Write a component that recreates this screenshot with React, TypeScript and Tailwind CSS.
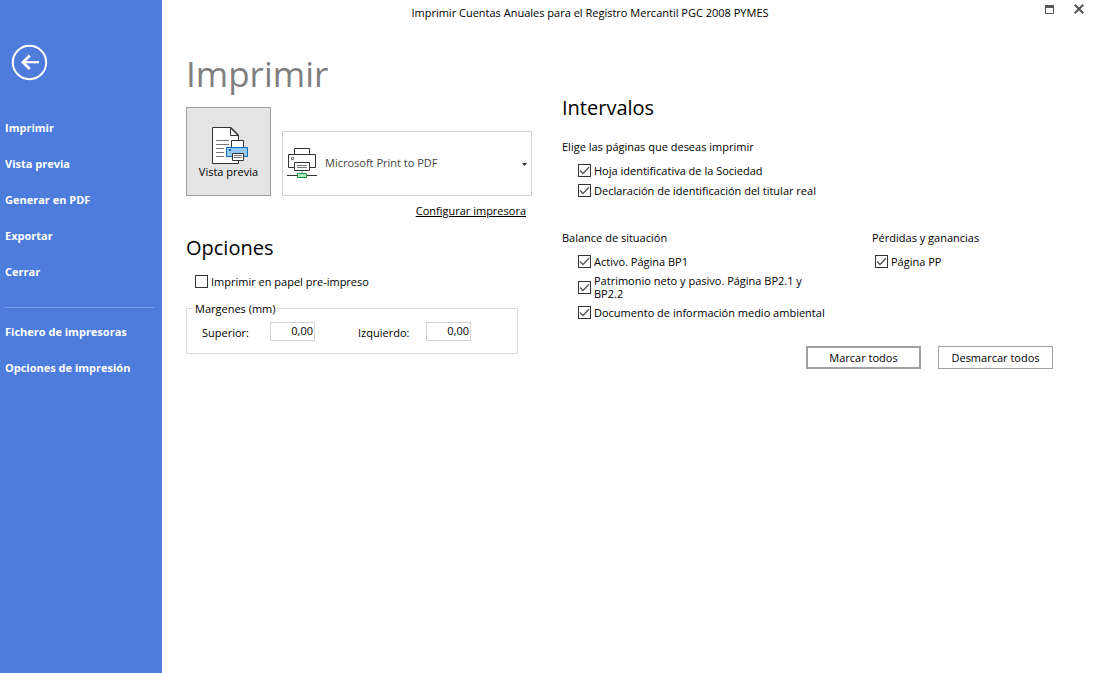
import React, { useState } from 'react'

const mainLinks = ['Imprimir', 'Vista previa', 'Generar en PDF', 'Exportar', 'Cerrar']
const extraLinks = ['Fichero de impresoras', 'Opciones de impresión']

const generalPages = [
  { id: 'hoja', label: 'Hoja identificativa de la Sociedad' },
  { id: 'titular', label: 'Declaración de identificación del titular real' },
]

const balancePages = [
  { id: 'bp1', label: 'Activo. Página BP1' },
  { id: 'bp2', label: 'Patrimonio neto y pasivo. Página BP2.1 y BP2.2' },
  { id: 'ambiental', label: 'Documento de información medio ambiental' },
]

const profitPages = [{ id: 'pp', label: 'Página PP' }]

const allPages = [...generalPages, ...balancePages, ...profitPages]

interface CheckProps {
  label: string;
  checked: boolean;
  onChange: (value: boolean) => void;
}

const Check = ({ label, checked, onChange }: CheckProps) => (
  <label className="flex items-center gap-[3px]">
    <span className="relative h-[13px] w-[13px] shrink-0">
      <input
        type="checkbox"
        checked={checked}
        onChange={(e) => onChange(e.target.checked)}
        className="peer block h-[13px] w-[13px] appearance-none border border-[#333333] bg-white"
      />
      <svg viewBox="0 0 13 13" className="pointer-events-none absolute inset-0 hidden peer-checked:block" fill="none" stroke="#555555" strokeWidth="1.4">
        <path d="M2 6.5 5 9.5 11 3.3" />
      </svg>
    </span>
    <span>{label}</span>
  </label>
)

const PreviewIcon = () => (
  <svg width="38" height="39" viewBox="-1 0 38 39" fill="none">
    <path d="M1.5 1.5h18l8 8v28h-26z" fill="#ffffff" stroke="#333333" />
    <path d="M19.5 1.5v8h8" stroke="#333333" />
    <path d="M19.5 1.5l8 8" stroke="#333333" strokeWidth="1.6" />
    <path d="M5 14.5h13M5 18.5h13M5 22.5h8M5 26.5h8M5 30.5h8" stroke="#777777" />
    <path d="M20.5 14.5h12v8h-12z" fill="#ffffff" stroke="#333333" />
    <path d="M15.5 21.5h21v9h-21z" fill="#91c9f2" stroke="#0f6cbd" />
    <path d="M18 24h2" stroke="#0f6cbd" strokeWidth="2" />
    <path d="M21.5 27.5h11v7h-11z" fill="#ffffff" stroke="#333333" />
    <path d="M23 29.5h8M23 31.5h8" stroke="#777777" />
  </svg>
)

const PrinterIcon = () => (
  <svg width="30" height="32" viewBox="0 0 30 32" fill="none">
    <path d="M7.5 1.5h15v6h-15z" fill="#ffffff" stroke="#333333" />
    <path d="M1.5 7.5h27v13h-27z" fill="#ffffff" stroke="#333333" />
    <path d="M4.5 10.5h2v2h-2z" stroke="#777777" />
    <path d="M7.5 15.5h15v8h-15z" fill="#ffffff" stroke="#333333" />
    <path d="M10 18.5h10M10 20.5h10" stroke="#777777" />
    <path d="M15 24v3" stroke="#bbbbbb" strokeWidth="2" />
    <path d="M0 28.5h30" stroke="#333333" />
    <path d="M10.5 26.5h9v4h-9z" fill="#b5e3be" stroke="#119a3c" />
  </svg>
)

const MarginField = ({ id, label }: { id: string; label: string }) => (
  <div className="flex items-center gap-2">
    <label htmlFor={id} className="w-[60px] pt-0.5">{label}</label>
    <input
      id={id}
      defaultValue="0,00"
      className="h-[19px] w-[45px] border border-[#d4d4d4] pr-px pb-0.5 text-right"
    />
  </div>
)

export default function App() {
  const [selected, setSelected] = useState<string[]>(allPages.map((p) => p.id))
  const [preprinted, setPreprinted] = useState(false)

  const toggle = (id: string, value: boolean) =>
    setSelected((prev) => (value ? [...prev, id] : prev.filter((x) => x !== id)))

  const renderPages = (pages: { id: string; label: string }[]) =>
    pages.map((p) => (
      <Check key={p.id} label={p.label} checked={selected.includes(p.id)} onChange={(v) => toggle(p.id, v)} />
    ))

  return (
    <div className="flex min-h-screen bg-white font-['Open_Sans',sans-serif] text-[11px] leading-[13px] text-black">
      <aside className="w-[162px] shrink-0 bg-[#4d7cdc] font-bold text-white">
        <button aria-label="Volver" className="mt-11 ml-[11px] block">
          <svg width="37" height="37" viewBox="0 0 37 37" fill="none" stroke="#ffffff">
            <circle cx="18.5" cy="18.5" r="16.7" strokeWidth="2" />
            <path d="M11 18.2h17" strokeWidth="2.2" />
            <path d="M18.8 11.5 12 18.2l6.8 6.7" strokeWidth="2.8" />
          </svg>
        </button>
        <nav className="mt-7">
          {mainLinks.map((t) => (
            <a key={t} href="#" className="flex h-9 items-center pl-[5px]">{t}</a>
          ))}
          <hr className="mt-[18px] mr-2 mb-[5px] ml-1 border-[#7a9ee8]" />
          {extraLinks.map((t) => (
            <a key={t} href="#" className="flex h-9 items-center pl-[5px]">{t}</a>
          ))}
        </nav>
      </aside>

      <div className="grow">
        <header className="flex h-[26px] items-center">
          <span className="grow pb-0.5 text-center">Imprimir Cuentas Anuales para el Registro Mercantil PGC 2008 PYMES</span>
          <div className="flex w-[75px] items-center gap-5 pb-2 pl-[27px]">
            <button aria-label="Maximizar">
              <svg width="9" height="9" viewBox="0 0 9 9" fill="none" stroke="#555555">
                <path d="M.5.5h8v8h-8z" />
                <path d="M0 1.5h9" strokeWidth="3" />
              </svg>
            </button>
            <button aria-label="Cerrar ventana">
              <svg width="10" height="10" viewBox="0 0 10 10" stroke="#555555" strokeWidth="2">
                <path d="M.7.7l8.6 8.6M9.3.7.7 9.3" />
              </svg>
            </button>
          </div>
        </header>

        <main className="grid grid-cols-[346fr_491fr] gap-[30px] pr-10 pl-6">
          <section>
            <h1 className="pt-6 text-[35px] leading-[48px] text-[#7f7f7f]">Imprimir</h1>
            <div className="mt-[9px] flex items-end gap-[11px]">
              <button className="flex h-[89px] w-[85px] shrink-0 flex-col items-center border border-[#a0a0a0] bg-[#e4e4e4] pt-[18px]">
                <PreviewIcon />
                <span>Vista previa</span>
              </button>
              <div className="relative h-[65px] grow text-[#444444]">
                <select aria-label="Impresora" className="h-full w-full appearance-none border border-[#d2d2d2] bg-white pb-0.5 pl-[42px]">
                  <option>Microsoft Print to PDF</option>
                </select>
                <span className="pointer-events-none absolute top-4 left-[5px]">
                  <PrinterIcon />
                </span>
                <svg width="5" height="3" viewBox="0 0 5 3" className="pointer-events-none absolute top-8 right-[5px]">
                  <path d="M0 0h5L2.5 3z" fill="#333333" />
                </svg>
              </div>
            </div>
            <div className="mt-2 pr-1.5 text-right">
              <a href="#" className="underline">Configurar impresora</a>
            </div>

            <h2 className="mt-[17px] text-xl leading-7">Opciones</h2>
            <div className="mt-[13px] pl-[9px]">
              <Check label="Imprimir en papel pre-impreso" checked={preprinted} onChange={setPreprinted} />
            </div>
            <fieldset className="mt-[14px] mr-[14px] h-[52px] border border-[#dcdcdc] px-[15px]">
              <legend className="-ml-2 px-px">Margenes (mm)</legend>
              <div className="flex gap-[43px] pt-[7px]">
                <MarginField id="superior" label="Superior:" />
                <MarginField id="izquierdo" label="Izquierdo:" />
              </div>
            </fieldset>
          </section>

          <section className="pt-[68px]">
            <h2 className="text-xl leading-7">Intervalos</h2>
            <p className="mt-[18px]">Elige las páginas que deseas imprimir</p>
            <div className="mt-[11px] flex flex-col gap-[7px] pl-4">{renderPages(generalPages)}</div>

            <div className="mt-[34px] grid grid-cols-[310fr_181fr]">
              <div>
                <h3>Balance de situación</h3>
                <div className="mt-[11px] flex flex-col gap-1.5 pr-10 pl-4">
                  {renderPages(balancePages)}
                </div>
              </div>
              <div>
                <h3>Pérdidas y ganancias</h3>
                <div className="mt-[11px] pl-[3px]">{renderPages(profitPages)}</div>
              </div>
            </div>

            <div className="mt-[27px] flex justify-end gap-[17px]">
              <button
                className="h-[23px] w-[115px] border-2 border-[#a0a0a0]"
                onClick={() => setSelected(allPages.map((p) => p.id))}
              >
                Marcar todos
              </button>
              <button className="h-[23px] w-[115px] border border-[#a0a0a0]" onClick={() => setSelected([])}>
                Desmarcar todos
              </button>
            </div>
          </section>
        </main>
      </div>
    </div>
  )
}
